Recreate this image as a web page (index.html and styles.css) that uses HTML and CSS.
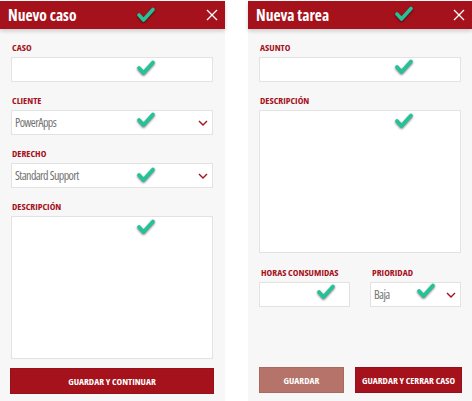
FILE: index.html
```html
<!DOCTYPE html>
<html lang="es">
<head>
<meta charset="utf-8">
<title>Formularios</title>
<link rel="stylesheet" href="styles.css">
</head>
<body>
<svg width="0" height="0" class="defs">
  <defs>
    <symbol id="check" viewBox="0 0 20 18">
      <polyline points="3,9 7.5,14 17,3.5" fill="none" stroke="#22c398" stroke-width="3.6" stroke-linecap="round" stroke-linejoin="round"/>
    </symbol>
    <symbol id="chev" viewBox="0 0 10 6">
      <polyline points="1,1 5,5 9,1" fill="none" stroke="#a5121c" stroke-width="1.4"/>
    </symbol>
  </defs>
</svg>

<section class="panel panel-left">
  <header class="head">
    <h1 class="title">Nuevo caso</h1>
    <svg class="chk chk-head-l"><use href="#check"/></svg>
    <svg class="close" viewBox="0 0 12 12"><path d="M1 1L11 11M11 1L1 11" stroke="#fff" stroke-width="1.3" fill="none"/></svg>
  </header>
  <div class="form">
    <div class="group">
      <label class="lbl">CASO</label>
      <div class="field"><svg class="chk chk-l"><use href="#check"/></svg></div>
    </div>
    <div class="group">
      <label class="lbl">CLIENTE</label>
      <div class="field select"><span class="val">PowerApps</span><svg class="chk chk-l chk-t1"><use href="#check"/></svg><svg class="chev"><use href="#chev"/></svg></div>
    </div>
    <div class="group">
      <label class="lbl">DERECHO</label>
      <div class="field select"><span class="val">Standard Support</span><svg class="chk chk-l chk-t3"><use href="#check"/></svg><svg class="chev"><use href="#chev"/></svg></div>
    </div>
    <div class="group group-last">
      <label class="lbl">DESCRIPCIÓN</label>
      <div class="field area"><svg class="chk chk-l"><use href="#check"/></svg></div>
    </div>
    <button class="btn btn-wide">GUARDAR Y CONTINUAR</button>
  </div>
</section>

<section class="panel panel-right">
  <header class="head">
    <h1 class="title">Nueva tarea</h1>
    <svg class="chk chk-head-r"><use href="#check"/></svg>
    <svg class="close" viewBox="0 0 12 12"><path d="M1 1L11 11M11 1L1 11" stroke="#fff" stroke-width="1.3" fill="none"/></svg>
  </header>
  <div class="form">
    <div class="group">
      <label class="lbl">ASUNTO</label>
      <div class="field"><svg class="chk chk-r chk-t1"><use href="#check"/></svg></div>
    </div>
    <div class="group">
      <label class="lbl">DESCRIPCIÓN</label>
      <div class="field area"><svg class="chk chk-r"><use href="#check"/></svg></div>
    </div>
    <div class="pair">
      <div class="group">
        <label class="lbl lbl-in">HORAS CONSUMIDAS</label>
        <div class="field"><svg class="chk chk-h chk-t1"><use href="#check"/></svg></div>
      </div>
      <div class="group">
        <label class="lbl lbl-in">PRIORIDAD</label>
        <div class="field select"><span class="val">Baja</span><svg class="chk chk-p chk-t0"><use href="#check"/></svg><svg class="chev"><use href="#chev"/></svg></div>
      </div>
    </div>
    <div class="actions">
      <button class="btn btn-muted">GUARDAR</button>
      <button class="btn btn-main">GUARDAR Y CERRAR CASO</button>
    </div>
  </div>
</section>
</body>
</html>
```

FILE: styles.css
```css
* { box-sizing: border-box; }
html, body { margin: 0; padding: 0; }
body {
  width: 472px;
  height: 401px;
  background: #fff;
  display: flex;
  gap: 23px;
  padding-top: 1px;
  overflow: hidden;
  font-family: "Open Sans", "Liberation Sans", Arial, sans-serif;
  font-stretch: 75%;
}
.defs { position: absolute; width: 0; height: 0; }

.panel {
  background: #f7f7f7;
  height: 400px;
  display: flex;
  flex-direction: column;
}
.panel-left { width: 225px; }
.panel-right { width: 224px; }

.head {
  position: relative;
  flex-shrink: 0;
  height: 28px;
  background: #a5121c;
  display: flex;
  align-items: center;
  justify-content: space-between;
  padding: 0 7px 0 8px;
  box-shadow: 0 2px 4px rgba(0,0,0,0.18);
  z-index: 1;
}
.title {
  margin: 0;
  color: #fff;
  font-size: 15.5px;
  font-weight: bold;
  white-space: nowrap;
}
.close { width: 12px; height: 12px; }

.form {
  flex: 1;
  display: flex;
  flex-direction: column;
  padding: 13px 11px 7px 11px;
}
.panel-left .form { padding-right: 12px; }

.group {
  flex-shrink: 0;
  display: flex;
  flex-direction: column;
  margin-bottom: 13px;
}
.group-last { margin-bottom: 9px; }
.lbl {
  display: block;
  height: 12px;
  line-height: 12px;
  margin: 0 0 3px 1px;
  color: #a5121c;
  font-size: 9.6px;
  font-weight: bold;
  white-space: nowrap;
}
.lbl-in { margin-left: 2px; }

.field {
  position: relative;
  height: 25px;
  background: #fff;
  border: 1px solid #e2e2e2;
}
.select {
  display: flex;
  align-items: center;
  justify-content: space-between;
  padding: 0 4px 0 3px;
}
.val {
  color: #737373;
  font-size: 12px;
  letter-spacing: -0.6px;
  white-space: nowrap;
}
.chev { width: 10px; height: 6px; }
.area { height: 143px; }

.chk {
  position: absolute;
  width: 20px;
  height: 18px;
  top: 1px;
  filter: drop-shadow(0 1.2px 0.8px rgba(0,0,0,0.55));
}
.chk-t0 { top: -1px; }
.chk-t1 { top: 0; }
.chk-t3 { top: 2px; }
.chk-head-l { left: 136px; top: 5px; }
.chk-head-r { left: 146px; top: 4px; }
.chk-l { left: 124px; }
.chk-r { left: 134px; }
.chk-h { left: 56px; }
.chk-p { left: 45px; }

.pair {
  flex-shrink: 0;
  display: grid;
  grid-template-columns: 91px 91px;
  column-gap: 20px;
  margin-top: 1px;
}
.pair .group { margin-bottom: 0; }

.btn {
  flex-shrink: 0;
  height: 26px;
  border: 1px solid rgba(0,0,0,0.08);
  color: #fff;
  font-family: inherit;
  font-stretch: 75%;
  font-size: 9.5px;
  font-weight: bold;
  white-space: nowrap;
  background: #a5121c;
  padding: 0;
  margin-top: auto;
}
.btn-wide { margin: auto -1px 0 -1px; }
.actions {
  flex-shrink: 0;
  margin-top: auto;
  margin-bottom: 1px;
  display: flex;
  gap: 11px;
}
.btn-muted { width: 85px; background: #b5736a; }
.btn-main { width: 107px; margin-right: -1px; }
```
